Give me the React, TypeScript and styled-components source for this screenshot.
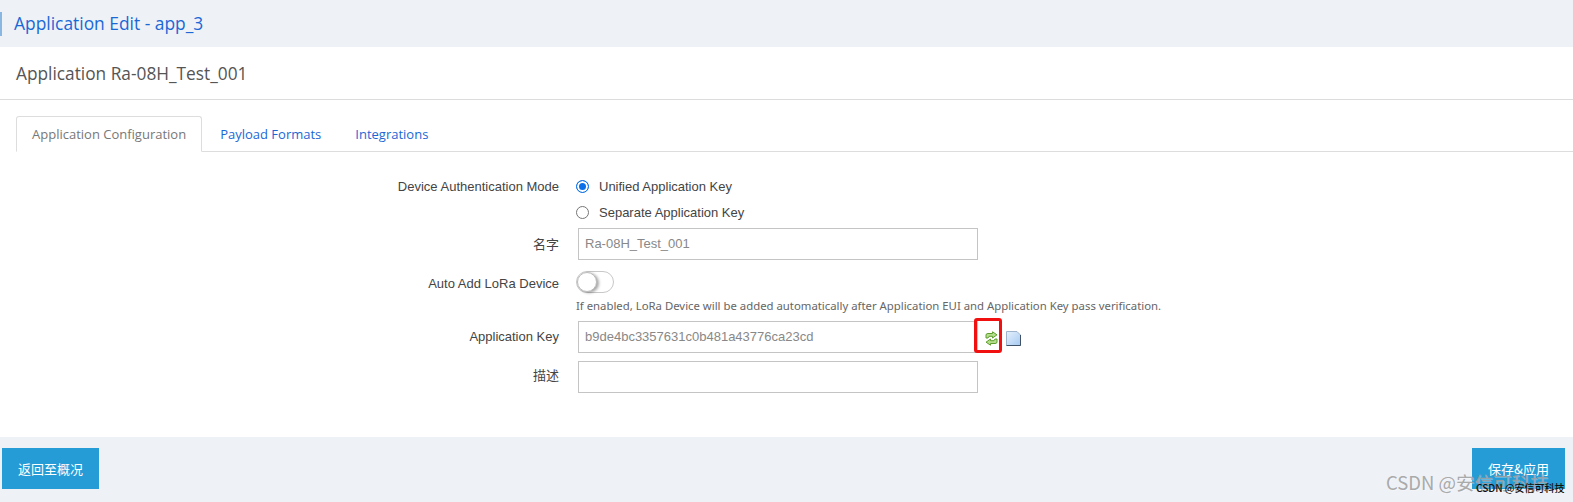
import React from 'react';
import styled, { createGlobalStyle } from 'styled-components';

const GlobalStyle = createGlobalStyle`
  html, body {
    margin: 0;
    padding: 0;
    background: #fff;
    font-family: "Open Sans", "Noto Sans CJK SC", sans-serif;
  }
`;

const Page = styled.div`
  position: relative;
  width: 1573px;
  height: 502px;
  overflow: hidden;
  display: flex;
  flex-direction: column;
  background: #eef1f6;
`;

const TopBar = styled.div`
  height: 47px;
  display: flex;
  align-items: center;
`;

const TitleMark = styled.h1`
  margin: 0;
  height: 24px;
  line-height: 23px;
  padding-left: 12px;
  border-left: 2px solid #8ab6e2;
  font-size: 17.4px;
  font-weight: 400;
  color: #1a68d6;
`;

const Main = styled.div`
  height: 390px;
  background: #fff;
`;

const AppHead = styled.h2`
  margin: 0;
  height: 52px;
  line-height: 54px;
  padding-left: 16px;
  border-bottom: 1px solid #dcdcdc;
  font-size: 17.3px;
  font-weight: 400;
  color: #555;
`;

const Tabs = styled.div`
  display: flex;
  margin: 16px 0 0 16px;
  height: 36px;
  border-bottom: 1px solid #ddd;
  box-sizing: border-box;
`;

const Tab = styled.div<{ $active?: boolean }>`
  height: 36px;
  box-sizing: border-box;
  padding: 0 15px;
  margin-right: 2px;
  line-height: 34px;
  font-size: 13px;
  border: 1px solid ${p => (p.$active ? '#ddd' : 'transparent')};
  border-bottom: ${p => (p.$active ? '1px solid #fff' : 'none')};
  border-radius: 3px 3px 0 0;
  background: ${p => (p.$active ? '#fff' : 'transparent')};
  color: ${p => (p.$active ? '#777' : '#1a68d6')};
`;

const Form = styled.div`
  display: grid;
  grid-template-columns: 559px 1fr;
  column-gap: 17px;
  padding-top: 21px;
  font-family: "Liberation Sans", "Noto Sans CJK SC", sans-serif;
  font-size: 13px;
  color: #444;
`;

const Label = styled.div<{ $h: number; $line?: number }>`
  height: ${p => p.$h}px;
  line-height: ${p => p.$line ?? p.$h}px;
  text-align: right;
`;

const Field = styled.div`
  display: flex;
  flex-direction: column;
`;

const RadioLine = styled.label`
  height: 26px;
  display: flex;
  align-items: center;
  gap: 10px;
`;

const RadioDot = styled.span<{ $on?: boolean }>`
  width: 13px;
  height: 13px;
  box-sizing: border-box;
  border-radius: 50%;
  border: ${p => (p.$on ? '1px solid #0a6fe8' : '1px solid #767676')};
  background: ${p => (p.$on ? '#0a6fe8' : '#fff')};
  box-shadow: ${p => (p.$on ? 'inset 0 0 0 2px #fff' : 'none')};
`;

const TextBox = styled.div<{ $mt?: number }>`
  width: 400px;
  height: 32px;
  flex: none;
  margin-left: 2px;
  margin-top: ${p => p.$mt ?? 0}px;
  box-sizing: border-box;
  border: 1px solid #c4c4c4;
  padding: 0 6px;
  line-height: 30px;
  font-size: 13px;
  color: #888;
`;

const Toggle = styled.div`
  position: relative;
  width: 38px;
  height: 22px;
  margin-top: 6px;
  box-sizing: border-box;
  border: 1px solid #c8c8c8;
  border-radius: 11px;
  background: #fff;
`;

const Knob = styled.span`
  position: absolute;
  left: 0;
  top: 0;
  width: 20px;
  height: 20px;
  box-sizing: border-box;
  border-radius: 50%;
  background: #fff;
  border: 1px solid #bbb;
  box-shadow: 2px 1px 3px rgba(0, 0, 0, 0.35);
`;

const Help = styled.div`
  margin-top: 5px;
  height: 16px;
  line-height: 16px;
  font-family: "Noto Sans", sans-serif;
  font-size: 11.35px;
  color: #666;
  white-space: nowrap;
`;

const KeyRow = styled.div`
  display: flex;
  align-items: flex-end;
`;

const Highlight = styled.div`
  width: 28px;
  height: 35px;
  margin: -3px 0 0 -4px;
  box-sizing: border-box;
  border: 3px solid #f01010;
  border-radius: 3px;
  display: flex;
  align-items: center;
  justify-content: flex-end;
  padding: 5px 1px 0 0;
`;

const DocIcon = styled.svg`
  margin: 0 0 7px 4px;
`;

const Footer = styled.div`
  flex: 1;
  display: flex;
  justify-content: space-between;
  padding: 11px 8px 0 2px;
`;

const ActionButton = styled.div<{ $w: number }>`
  width: ${p => p.$w}px;
  height: 41px;
  line-height: 42px;
  text-align: center;
  background: #259cd6;
  color: #fff;
  font-family: "Noto Sans CJK SC", sans-serif;
  font-size: 13px;
`;

const Watermark = styled.div`
  position: absolute;
  left: 1386px;
  top: 468px;
  font-family: "Noto Sans CJK SC", sans-serif;
  font-size: 18.5px;
  line-height: 28px;
  color: rgba(160, 160, 160, 0.9);
  text-shadow: 1px 1px 0 rgba(255, 255, 255, 0.3);
  white-space: nowrap;
`;

const SmallMark = styled.div`
  position: absolute;
  left: 1476px;
  top: 481px;
  font-family: "Noto Sans CJK SC", sans-serif;
  font-size: 10px;
  font-weight: 500;
  line-height: 14px;
  color: #111;
  white-space: nowrap;
`;

const RefreshIcon = () => (
  <svg width="13" height="15" viewBox="0 0 13 15">
    <path d="M1 7 V4 Q1 2.5 3 2.5 H7.5 V0.8 L12 3.8 L7.5 7 V5.3 H4 L3 7 Z" fill="#b4de8c" stroke="#5e9e2e" strokeWidth="1" />
    <path d="M12 8 V11 Q12 12.5 10 12.5 H5.5 V14.2 L1 11.2 L5.5 8 V9.7 H9 L10 8 Z" fill="#b4de8c" stroke="#5e9e2e" strokeWidth="1" />
  </svg>
);

const App: React.FC = () => (
  <Page>
    <GlobalStyle />
    <TopBar>
      <TitleMark>Application Edit - app_3</TitleMark>
    </TopBar>
    <Main>
      <AppHead>Application Ra-08H_Test_001</AppHead>
      <Tabs>
        <Tab $active>Application Configuration</Tab>
        <Tab>Payload Formats</Tab>
        <Tab>Integrations</Tab>
      </Tabs>
      <Form>
        <Label $h={26} $line={28}>Device Authentication Mode</Label>
        <Field>
          <RadioLine>
            <RadioDot $on />
            Unified Application Key
          </RadioLine>
          <RadioLine>
            <RadioDot />
            Separate Application Key
          </RadioLine>
        </Field>
        <Label $h={40}>名字</Label>
        <Field>
          <TextBox $mt={3}>Ra-08H_Test_001</TextBox>
        </Field>
        <Label $h={56} $line={38}>Auto Add LoRa Device</Label>
        <Field>
          <Toggle>
            <Knob />
          </Toggle>
          <Help>If enabled, LoRa Device will be added automatically after Application EUI and Application Key pass verification.</Help>
        </Field>
        <Label $h={40} $line={32}>Application Key</Label>
        <Field>
          <KeyRow>
            <TextBox>b9de4bc3357631c0b481a43776ca23cd</TextBox>
            <Highlight>
              <RefreshIcon />
            </Highlight>
            <DocIcon width="15" height="15" viewBox="0 0 15 15">
              <defs>
                <linearGradient id="docFill" x1="0" y1="0" x2="1" y2="1">
                  <stop offset="0" stopColor="#e6f1fc" />
                  <stop offset="1" stopColor="#a6caf2" />
                </linearGradient>
              </defs>
              <path d="M0.5 0.5 H11 L14.5 4 V14.5 H0.5 Z" fill="url(#docFill)" stroke="#9db4cc" strokeWidth="1" />
              <path d="M14.5 4 V14.5 H0.5" fill="none" stroke="#3f5268" strokeWidth="1" />
            </DocIcon>
          </KeyRow>
        </Field>
        <Label $h={32} $line={30}>描述</Label>
        <Field>
          <TextBox>&nbsp;</TextBox>
        </Field>
      </Form>
    </Main>
    <Footer>
      <ActionButton $w={97}>返回至概况</ActionButton>
      <ActionButton $w={93}>保存&amp;应用</ActionButton>
    </Footer>
    <Watermark>CSDN @安信可科技</Watermark>
    <SmallMark>CSDN @安信可科技</SmallMark>
  </Page>
);

export default App;
